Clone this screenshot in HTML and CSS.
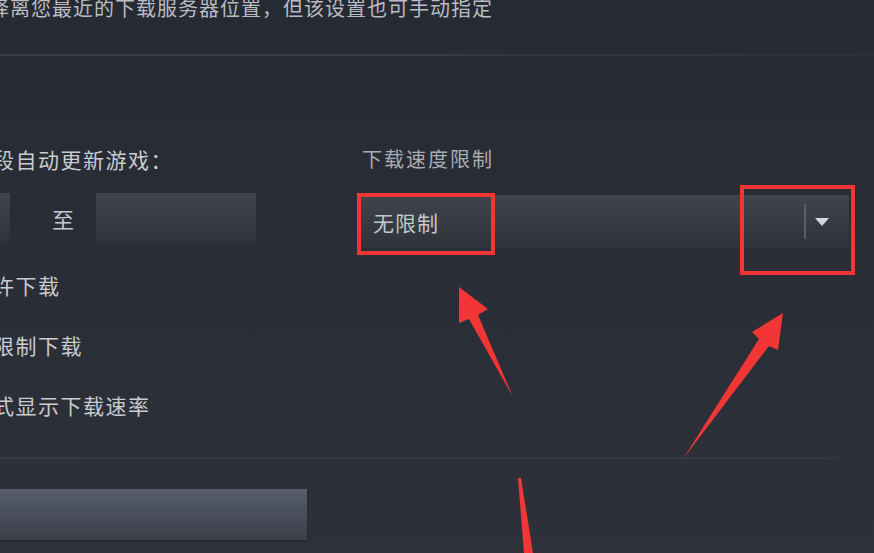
FILE: index.html
```html
<!doctype html>
<html lang="zh-CN">
<head>
	<meta charset="UTF-8">
	<title>下载设置</title>
	<link rel="stylesheet" href="styles.css">
</head>
<body>
	<div class="page">
		<p class="desc">选择离您最近的下载服务器位置，但该设置也可手动指定</p>
		<div class="rule"></div>
		<div class="cols">
			<div class="col-left">
				<div class="label">段自动更新游戏：</div>
				<div class="range">
					<span class="field field-start"></span>
					<span class="to">至</span>
					<span class="field field-end"></span>
				</div>
				<div class="opt">许下载</div>
				<div class="opt">限制下载</div>
				<div class="opt">式显示下载速率</div>
			</div>
			<div class="col-right">
				<div class="label dim">下载速度限制</div>
				<div class="select">
					<span class="select-value">无限制</span>
					<span class="sep"></span>
					<span class="caret"></span>
				</div>
			</div>
		</div>
		<div class="rule rule-low"></div>
		<div class="btn"></div>
	</div>

	<!-- 标注：红框和箭头 -->
	<svg class="marks" width="874" height="553" viewBox="0 0 874 553">
		<rect x="359" y="195" width="134" height="58" fill="none" stroke="#f03535" stroke-width="4"/>
		<rect x="742" y="187" width="111" height="86" fill="none" stroke="#f03535" stroke-width="4"/>
		<polygon fill="#f23636" points="459,287 488,309 478,315 513,397 469,319 459,323"/>
		<polygon fill="#f23636" points="783,313 778,350 769,346 683,459 759,339 752,332"/>
		<polygon fill="#f23636" points="518,478 521,478 533,553 524,553"/>
	</svg>
</body>
</html>
```

FILE: styles.css
```css
html{
	height: 100%;
}
body{
	margin: 0;
	height: 100%;
	overflow: hidden;
	background: linear-gradient(#262a32, #2e3139);
	font-family: "Noto Sans CJK SC", "Noto Sans", sans-serif;
	color: #c6c9ce;
	position: relative;
}
.page{
	width: 874px;
}
.desc{
	margin: -4px 0 0 -32px;
	font-size: 20px;
	line-height: 24px;
	letter-spacing: 1px;
	color: #b9bcc2;
	white-space: nowrap;
}
.rule{
	margin-top: 34px;
	height: 2px;
	background: linear-gradient(to right, #393d46, #343841 70%, #2b2f37);
}
.rule-low{
	margin-top: 22px;
	background: linear-gradient(to right, #373b43, #353941 90%, #2e3139);
}
.cols{
	display: flex;
	padding-top: 88px;
}
.col-left{
	width: 364px;
	margin-left: -7px;
}
.col-right{
	width: 492px;
}
.label{
	font-size: 21px;
	line-height: 30px;
	letter-spacing: 1.5px;
	color: #c8cbd0;
	white-space: nowrap;
}
.dim{
	padding-left: 5px;
	font-size: 20px;
	letter-spacing: 2px;
	color: #a9adb3;
}
.range{
	display: flex;
	align-items: center;
	height: 50px;
	margin: 19px 0 12px;
}
.field{
	height: 50px;
	background: linear-gradient(#3f434c, #2f333b);
}
.field-start{
	width: 17px;
}
.field-end{
	width: 160px;
}
.to{
	width: 66px;
	padding-left: 20px;
	text-align: center;
	font-size: 22px;
	color: #c4c7cc;
}
.opt{
	height: 60px;
	line-height: 60px;
	font-size: 21px;
	letter-spacing: 1.5px;
	color: #c8cbd0;
	white-space: nowrap;
}
.select{
	display: flex;
	align-items: center;
	height: 53px;
	margin-top: 21px;
	padding: 0 20px 0 16px;
	background: linear-gradient(#40444d, #2e3239);
}
.select-value{
	flex: 1;
	font-size: 21px;
	letter-spacing: 1px;
	color: #c4c7cc;
}
.sep{
	width: 2px;
	height: 35px;
	background: #5a5e66;
	margin-right: 9px;
}
.caret{
	width: 0;
	height: 0;
	border-left: 7px solid transparent;
	border-right: 7px solid transparent;
	border-top: 8px solid #d6d7da;
}
.btn{
	margin-top: 30px;
	width: 307px;
	height: 51px;
	background: linear-gradient(#575d6b, #3a3f49);
	box-shadow: 0 1px 2px rgba(0,0,0,0.3);
}
.marks{
	position: absolute;
	left: 0;
	top: 0;
}
```
